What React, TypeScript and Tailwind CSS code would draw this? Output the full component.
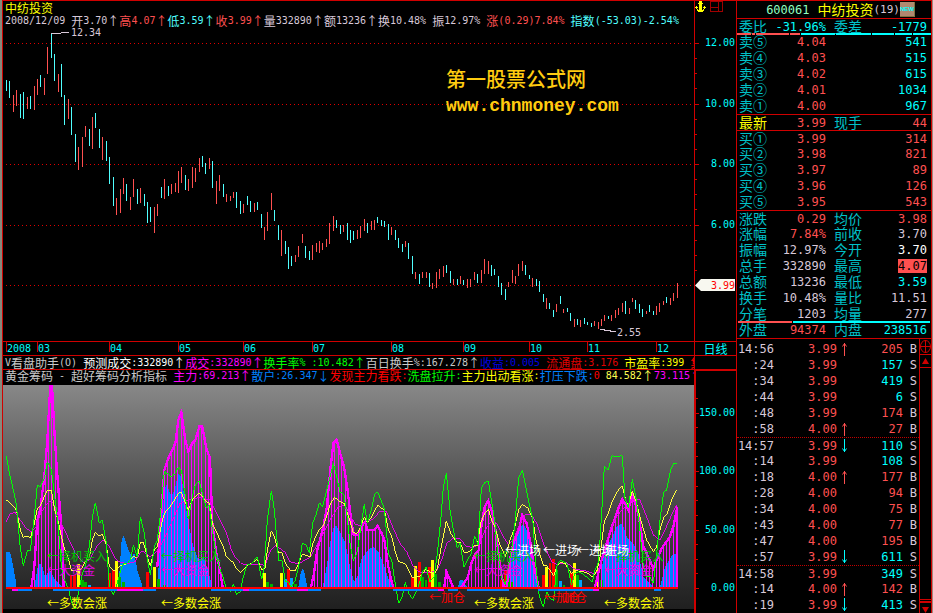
import React from "react";
import clsx from "clsx";

const MONO = "font-['DejaVu_Sans_Mono','Liberation_Mono',monospace]";
const CJK = "font-['Noto_Sans_CJK_SC',sans-serif]";

/* Half-width runs are set in a monospace face, everything else in the CJK face. */
function Mixed({ text, className }: { text: string; className?: string }) {
  const runs = text.split(/([\x20-\x7e]+)/).filter(Boolean);
  return (
    <span className={clsx("flex shrink-0 items-center whitespace-pre leading-none", className)}>
      {runs.map((run, i) => (
        <span key={i} className={/^[\x20-\x7e]/.test(run) ? clsx(MONO, "text-[10px]") : clsx(CJK, "text-[12px]")}>
          {run}
        </span>
      ))}
    </span>
  );
}

type Piece = [string, string];

const status: Piece[] = [
  ["2008/12/09 开3.70↑", "text-[#d8c8d8]"],
  ["高4.07↑", "text-[#ff5050]"],
  ["低3.59↑", "text-[#50ffff]"],
  ["收3.99↑", "text-[#ff5050]"],
  ["量332890↑额13236↑换10.48% 振12.97% ", "text-[#d8c8d8]"],
  ["涨(0.29)7.84% ", "text-[#ff5050]"],
  ["指数(-53.03)-2.54%", "text-[#50ffff]"],
];

const helperLine: Piece[] = [
  ["V看盘助手(O) ", "text-[#c8c8c8]"],
  ["预测成交:332890↑", "text-white"],
  ["成交:332890↑", "text-[#ff00ff]"],
  ["换手率% :10.482↑", "text-[#00ff00]"],
  ["百日换手%:167.278↑", "text-[#c8c8c8]"],
  ["收益:0.005 ", "text-[#0000e0]"],
  ["流通盘:3.176 ", "text-[#e00000]"],
  ["市盈率:399 ", "text-[#ffff00]"],
  ["集", "text-[#ff0000]"],
];

const chipLine: Piece[] = [
  ["黄金筹码 - 超好筹码分析指标 ", "text-[#c8c8c8]"],
  ["主力:69.213↑", "text-[#ff00ff]"],
  ["散户:26.347↓", "text-[#0080ff]"],
  ["发现主力看跌:", "text-[#ff0000]"],
  ["洗盘拉升:", "text-[#00ff00]"],
  ["主力出动看涨:", "text-[#ffff00]"],
  ["打压下跌:", "text-[#0080ff]"],
  ["0 ", "text-[#ff0000]"],
  ["84.582↑", "text-[#ffff50]"],
  ["73.115↑", "text-[#ff00ff]"],
];

function Line({ pieces }: { pieces: Piece[] }) {
  return (
    <div className="flex min-w-0 flex-1 items-center overflow-x-clip pl-0.5">
      {pieces.map(([text, tone]) => (
        <Mixed key={text} text={text} className={tone} />
      ))}
    </div>
  );
}

/* x, high, low of every daily bar: "u" is a rising day, "d" a falling one. */
const bars =
  "6,80,91,d 9,81,98,d 13,95,112,u 16,90,106,u 20,94,118,d 23,92,119,d 27,97,109,u 30,96,109,d 34,86,110,u 37,79,95,u 40,75,87,d 44,78,95,u 47,47,74,u 51,33,58,d 54,54,81,d 58,74,92,u 61,64,97,d 64,95,125,d 68,99,119,u 71,107,135,d 75,134,162,d 78,147,170,u 82,137,167,u 85,126,137,u 89,129,146,d 92,117,149,u 95,113,128,d 99,129,148,d 102,137,160,u 106,141,161,d 109,157,184,d 113,177,206,d 116,198,215,u 120,189,213,u 123,178,194,u 126,184,201,d 130,197,210,u 133,179,197,u 137,189,204,d 140,188,203,u 144,194,206,d 147,202,223,d 150,207,222,d 154,207,233,u 157,204,216,u 161,187,198,d 164,179,199,u 168,186,196,d 171,184,194,u 175,183,192,u 178,171,193,u 181,167,183,u 185,175,190,d 188,179,191,u 192,167,188,u 195,168,182,u 199,158,172,u 202,156,167,d 205,163,174,d 209,158,169,u 212,161,188,d 216,181,204,u 219,175,191,u 223,184,197,d 226,194,202,u 230,196,201,u 233,192,198,u 236,192,208,d 240,201,214,d 243,204,213,u 247,196,205,d 250,201,212,d 254,203,212,u 257,202,210,d 261,214,228,d 264,227,240,u 267,212,231,u 271,193,210,u 274,210,221,d 278,225,240,d 281,230,256,u 285,241,254,d 288,247,269,d 291,256,266,d 295,255,262,u 298,246,257,u 302,234,243,u 305,246,258,d 309,251,260,d 312,245,260,u 316,243,252,u 319,241,253,u 322,243,250,u 326,239,247,u 329,223,244,u 333,216,231,u 336,220,228,d 340,225,234,d 343,225,232,u 347,223,240,d 350,230,243,d 353,231,240,d 357,230,239,u 360,226,238,u 364,219,231,u 367,223,233,d 371,221,230,u 374,220,230,u 377,217,223,d 381,220,226,d 384,221,227,d 388,224,240,d 391,227,235,u 395,230,240,d 398,238,248,d 402,244,252,d 405,241,247,u 408,243,259,d 412,256,274,d 415,272,279,u 419,274,284,d 422,272,278,u 426,272,278,u 429,273,287,d 432,283,289,u 436,272,288,u 439,269,279,u 443,266,277,u 446,265,273,d 450,271,283,d 453,279,285,u 457,279,285,d 460,276,284,u 463,280,285,d 467,279,288,u 470,279,287,u 474,272,280,u 477,274,283,d 481,270,283,u 484,259,274,u 488,261,274,u 491,265,276,d 494,269,275,d 498,276,287,d 501,283,295,d 505,289,300,d 508,282,287,u 512,270,283,u 515,276,284,u 518,264,276,u 522,261,271,u 525,265,275,d 529,275,279,d 532,278,287,u 536,279,286,d 539,281,292,d 543,294,302,d 546,298,309,u 549,303,309,d 553,310,317,d 556,304,312,u 560,296,304,d 563,309,313,u 567,308,312,d 570,313,321,d 574,319,327,u 577,319,325,d 580,320,327,u 584,318,324,d 587,322,325,d 591,323,327,d 594,321,326,u 598,322,329,u 601,319,326,u 604,315,321,u 608,316,319,d 611,315,321,u 615,310,318,u 618,308,315,u 622,303,312,u 625,301,314,d 629,308,314,u 632,298,302,u 635,300,309,d 639,304,313,d 642,309,317,d 646,311,314,u 649,305,312,d 653,311,315,d 656,306,315,u 659,303,312,u 663,301,305,u 666,297,303,d 670,298,305,u 673,293,301,u 677,283,298,u"
    .split(" ")
    .map((b) => b.split(","));

function barPath(kind: string) {
  return bars
    .filter((b) => b[3] === kind)
    .map(([x, hi, lo]) => `M${x} ${hi}V${lo}`)
    .join("");
}

function PriceChart() {
  return (
    <svg
      className="block h-0 min-h-0 w-full flex-1"
      viewBox="3 28 691 313"
      preserveAspectRatio="none"
      shapeRendering="crispEdges"
      role="img"
      aria-label="日线 K 线图"
    >
      {[43, 104, 164, 225, 285].map((y) => (
        <path key={y} d={`M6 ${y + 0.5}H692`} stroke="#e00000" strokeDasharray="1 3" />
      ))}
      <g transform="translate(.5 0)" fill="none">
        <path d={barPath("u")} stroke="#ff5050" />
        <path d={barPath("d")} stroke="#50ffff" />
      </g>
      <path d="M51 33.5H61M61 32.5H69M600 329.5H605M604 330.5H611M610 331.5H616" stroke="#d8c8d8" />
      <g fill="#d8c8d8" className={clsx(MONO, "text-[10px]")}>
        <text x="71" y="36">12.34</text>
        <text x="617" y="336">2.55</text>
      </g>
      <g fill="#ffcc10">
        <text x="446" y="87" className="font-['Noto_Sans_CJK_SC',sans-serif] text-[20px] font-medium">第一股票公式网</text>
        <text x="446" y="111" className="font-['Liberation_Mono',monospace] text-[18px] font-bold">www.chnmoney.com</text>
      </g>
    </svg>
  );
}

function PriceAxis() {
  const minor = [58, 73, 88, 119, 134, 149, 179, 194, 209, 240, 255, 270];
  const major: [number, string][] = [[43, "12.00"], [104, "10.00"], [164, "8.00"], [225, "6.00"]];
  return (
    <svg className="block h-0 min-h-0 w-full flex-1" viewBox="695 28 41 313" preserveAspectRatio="none">
      {minor.map((y) => (
        <path key={y} d={`M695 ${y + 0.5}h2`} stroke="#d00000" />
      ))}
      {major.map(([y, label]) => (
        <g key={label}>
          <path d={`M695 ${y + 0.5}h4`} stroke="#d00000" />
          <text x="735" y={y + 3} textAnchor="end" fill="#00ffff" className={clsx(MONO, "text-[10px]")}>{label}</text>
        </g>
      ))}
      <path d="M695 285.5l6-6.500h34v12h-34z" fill="#f8f8f0" />
      <text x="735" y="289" textAnchor="end" fill="#ff0000" className={clsx(MONO, "text-[10px]")}>3.99</text>
    </svg>
  );
}

const months: [string, number][] = [
  ["2008", 31], ["03", 72], ["04", 69], ["05", 65], ["06", 69], ["07", 79],
  ["08", 72], ["09", 66], ["10", 58], ["11", 69], ["12", 38],
];

/* The lower pane is charted in three stretches, on a grid of thirds. */
const BASE = 622;

interface Stretch {
  offset: number;
  green: string;
  yellow: string;
  thin: string;
  thick: string[];
  blue: string[];
  columns: string;
  strip: string;
}

const stretches: Stretch[] = [
  {
    offset: 0,
    green: "19,228 28,278 40,330 49,375 61,505 70,557 82,512 91,512 103,410 112,315 121,320 133,295 142,245 154,270 163,340 175,440 184,560 193,600 205,625 214,665 226,688 235,640 247,580 256,560 268,500 277,410 286,368 298,430 307,420 319,490 328,615 340,645 349,620 361,575 370,552 382,550 391,540 400,495 412,530 421,410 433,460 442,540 451,585 463,500 472,480 484,380 493,275 514,290 526,280 535,262 544,270 556,350 565,418 577,350 586,315 598,303 607,340 619,385 628,375 637,450 649,530 658,560 670,595 679,628 691,632 700,612 709,643",
    yellow: "19,360 40,378 49,390 61,450 70,472 82,468 91,474 103,430 112,385 121,378 133,350 142,331 154,331 163,385 175,425 184,470 193,505 205,535 214,570 226,572 235,577 247,562 256,545 268,535 277,480 286,458 298,468 307,463 319,495 328,560 340,572 349,570 361,558 382,550 400,530 412,532 421,487 430,487 442,530 451,557 463,510 472,500 484,435 493,400 514,375 535,340 544,337 556,368 565,390 577,360 598,338 619,365 628,370 637,430 649,455 658,475 670,500 679,530 691,542",
    thin: "19,425 30,402 45,397 61,420 80,447 95,455 110,440 121,400 142,370 154,362 163,375 184,430 205,475 226,520 250,548 268,540 290,500 310,480 325,495 345,535 361,548 385,550 405,545 425,512 450,530 475,510 500,460 540,370 560,362 600,352 630,360 650,400 680,460 691,500",
    thick: [
      "94,622 103,560 112,420 121,385 133,290 142,180 151,15 156,15 163,150 170,260 184,440 193,622",
      "472,560 484,400 493,270 505,235 526,190 535,120 544,97 556,180 565,215 577,190 586,180 598,140 607,140 619,205 630,235 637,430 649,520 660,570 668,622",
    ],
    blue: [
      "19,622 19,515 30,515 38,550 47,600 49,622",
      "103,622 115,550 125,552 135,590 150,570 165,600 190,622",
      "355,622 365,480 370,468 376,480 385,510 395,530 403,520 412,570 425,610 428,622",
      "472,622 482,460 493,330 500,315 515,350 526,320 535,280 544,290 556,370 565,430 580,500 595,540 610,530 625,575 637,622",
    ],
    columns: "213,585,r 223,585,r 235,552,y 247,600,g 256,607,g 268,615,c 328,580,r 340,570,r 349,542,y 358,590,g 370,605,g 442,577,r 463,562,y 475,597,g 493,615,g",
    strip: "36,55,m 55,97,b 160,350,b 350,430,m 430,467,b 633,692,b",
  },
  {
    offset: 690,
    green: "0,635 10,612 19,643 30,635 40,590 52,552 61,555 82,530 95,598 103,560 112,420 124,332 133,390 146,542 156,542 166,605 175,605 184,622 196,600 206,560 217,490 228,495 238,518 248,430 258,405 268,368 278,380 290,330 302,285 310,250 320,290 330,335 342,345 350,400 360,490 370,542 382,515 394,430 403,373 412,430 424,390 433,345 443,335 455,365 463,385 475,520 485,540 497,620 506,670 517,650 526,607 536,640 547,657 558,635 568,610 578,575 588,562 600,605 612,590 622,520 634,400 640,320 649,280 660,390 670,450 682,505 690,490",
    yellow: "0,542 10,547 20,568 32,577 50,558 61,552 82,538 95,570 105,565 112,510 124,452 133,470 145,517 155,517 166,550 182,572 196,572 206,550 217,522 240,530 248,490 268,448 280,438 290,410 300,375 313,352 330,365 342,370 356,410 370,458 382,460 392,440 403,410 412,428 424,412 443,376 463,390 475,450 485,470 497,520 506,545 526,552 547,592 568,590 588,568 600,575 612,585 622,565 634,500 649,422 662,460 680,487 690,487",
    thin: "0,500 15,530 32,550 50,555 90,552 105,558 120,515 137,495 165,517 180,545 205,552 225,540 240,532 270,480 300,420 325,380 345,375 357,400 375,432 390,437 410,425 430,418 450,393 470,395 490,445 510,490 530,515 550,560 570,577 600,578 620,572 635,540 650,490 670,475 690,477",
    thick: [
      "243,622 252,580 262,510 280,440 290,385 302,260 310,190 320,180 332,225 342,260 352,325 360,390 370,463 385,465 400,430 405,425 412,450 433,450 443,437 455,460 463,480 475,560 485,605 490,622",
      "643,622 649,575 658,595 670,622",
    ],
    blue: [
      "205,622 213,575 217,568 222,572 232,622",
      "278,622 290,560 300,490 310,445 318,437 330,455 345,485 360,560 372,605 382,590 395,535 410,515 428,500 445,515 460,550 475,595 490,622",
      "683,622 690,600 700,605 712,622",
    ],
    columns: "103,580,y 112,605,g 124,612,g 155,580,y 166,597,c 175,567,r 184,595,c 196,612,g 547,592,r 556,558,y 568,545,r 578,590,g 588,600,g 598,562,r 607,540,y 617,583,g 628,605,g",
    strip: "0,40,b 40,58,m 58,200,b 200,235,m 235,272,b 490,625,b 625,643,m 655,685,b",
  },
  {
    offset: 1380,
    green: "0,490 12,560 22,540 34,520 44,467 54,495 64,325 74,307 85,304 95,365 105,430 112,510 124,590 136,615 145,560 156,500 166,420 176,292 187,270 197,320 207,370 218,415 228,560 238,650 250,682 260,635 270,655 281,662 290,560 301,540 315,548 322,552 334,615 345,580 356,575 370,582 387,598 397,605 405,570 414,550 420,480 428,350 433,260 445,270 456,227 466,230 487,227 495,355 505,385 517,298 528,355 538,430 550,560 560,590 570,590 580,610 590,520 600,420 611,337 620,330 632,270 642,250 652,250",
    yellow: "0,487 12,517 24,517 34,510 44,495 52,497 62,430 74,400 85,388 95,420 105,440 118,490 136,530 150,480 162,450 176,390 187,373 204,385 218,415 228,480 238,520 250,555 260,558 270,570 281,588 290,560 301,547 315,550 334,580 345,572 370,575 387,582 397,590 410,575 420,530 433,425 445,400 456,365 475,330 487,317 497,360 505,375 517,333 530,370 545,430 560,480 580,515 590,500 600,450 611,412 622,400 635,360 650,330",
    thin: "0,477 20,500 40,502 60,490 75,450 95,422 110,430 130,470 145,493 160,480 180,430 195,405 215,405 230,430 250,490 275,545 290,553 320,548 345,568 375,572 400,580 415,575 430,520 450,450 470,410 490,385 515,360 540,360 560,410 580,465 600,480 615,450 635,405 650,375",
    thick: [
      "4,622 12,610 24,590 34,550 44,525 56,510 64,440 74,380 85,362 97,400 105,440 113,500 124,585 134,622",
      "140,622 150,540 160,490 176,450 187,405 200,430 210,480 222,560 236,622",
      "405,622 415,580 425,540 440,490 456,440 475,385 487,357 505,390 517,345 535,400 550,500 560,520 580,565 590,540 605,505 630,470 640,440 652,380 652,622",
    ],
    blue: [
      "0,600 10,602 20,622 0,622",
      "145,622 150,540 160,500 176,450 190,430 205,460 220,540 236,622",
      "420,622 430,530 445,495 470,440 487,430 500,470 520,490 535,520 550,590 560,600 580,622",
      "600,622 615,560 640,520 652,525 652,622",
    ],
    columns: "124,600,r 136,570,r 145,595,g 156,607,g 250,585,r 260,562,y 270,548,r 281,537,r 290,570,g 301,603,c 312,615,g 334,578,r 343,550,y 352,585,g 362,600,c 414,570,y 424,600,g",
    strip: "22,148,b 235,400,b 400,418,m 582,602,b",
  },
];

const inks: Record<string, string> = {
  r: "#ff0000", y: "#ffff00", g: "#00b000", c: "#00a0ff", m: "#ff00ff", b: "#0080ff",
};

/* Vertical stems from a curve down to the base line, one for every trading day. */
function stems(points: string) {
  const pts = points.split(" ").map((p) => p.split(",").map(Number));
  const last = pts[pts.length - 1][0];
  let d = "";
  for (let x = pts[0][0] + 9; x < last; x += 10.2) {
    const i = pts.findIndex((p) => p[0] > x);
    if (i < 1) continue;
    const [x0, y0] = pts[i - 1];
    const [x1, y1] = pts[i];
    const y = y0 + ((y1 - y0) * (x - x0)) / (x1 - x0);
    d += `M${Math.round(x / 3) * 3 + 1.5} ${Math.round(y)}V${BASE}`;
  }
  return d;
}

const notes: [number, number, string, string][] = [
  [47, 561, "←择机买入", "#00c800"],
  [161, 561, "←择机买入", "#00c800"],
  [474, 561, "←择机买入", "#00c800"],
  [604, 561, "←择机买入", "#00c800"],
  [47, 575, "←大资金", "#e800e8"],
  [161, 575, "←大资金", "#e800e8"],
  [474, 575, "←大资金", "#e800e8"],
  [604, 575, "←大资金", "#e800e8"],
  [505, 555, "←进场", "#ffffff"],
  [543, 555, "←进场", "#ffffff"],
  [577, 555, "←进场", "#ffffff"],
  [593, 555, "←进场", "#ffffff"],
  [429, 602, "←加仓", "#ff0000"],
  [544, 602, "←加仓", "#ff0000"],
  [551, 602, "←加仓", "#ff0000"],
  [47, 608, "←多数会涨", "#ffff00"],
  [161, 608, "←多数会涨", "#ffff00"],
  [474, 608, "←多数会涨", "#ffff00"],
  [604, 608, "←多数会涨", "#ffff00"],
];

function ChipChart() {
  return (
    <svg
      className="block h-full min-w-0 flex-1 bg-linear-to-b from-[#888888] via-[#4c4c4c] to-[#202020]"
      viewBox="3 385 691 224"
      preserveAspectRatio="none"
      shapeRendering="crispEdges"
      role="img"
      aria-label="黄金筹码指标图"
    >
      {stretches.map((s) => (
        <g key={s.offset} transform={`translate(0 380) scale(.33333) translate(${s.offset} 0)`} fill="none">
          {s.blue.map((p) => <polygon key={p} points={p} fill="#0080ff" />)}
          {s.columns.split(" ").map((c) => {
            const [x, y, ink] = c.split(",");
            return <rect key={c} x={Number(x) - 4} y={y} width={8} height={BASE - Number(y)} fill={inks[ink]} />;
          })}
          {s.thick.map((p) => (
            <g key={p} stroke="#ff00ff">
              <path d={stems(p)} strokeWidth={3} />
              <polyline points={p} strokeWidth={7} />
            </g>
          ))}
          <g strokeWidth={3}>
            <polyline points={s.thin} stroke="#e800e8" />
            <polyline points={s.yellow} stroke="#ffff40" />
            <polyline points={s.green} stroke="#00ff00" />
          </g>
          {s.strip.split(" ").map((c) => {
            const [a, b, ink] = c.split(",");
            return <path key={c} d={`M${a} 631H${b}`} stroke={inks[ink]} strokeWidth={7} />;
          })}
        </g>
      ))}
      <path d="M6 588H678" stroke="#ff0000" strokeWidth={2} />
      <g className={clsx(CJK, "text-[12px]")}>
        {notes.map(([x, y, label, fill]) => (
          <text key={`${x}-${y}`} x={x} y={y} fill={fill}>{label}</text>
        ))}
      </g>
    </svg>
  );
}

function ChipAxis() {
  const major: [number, string][] = [[413, "150.00"], [471, "100.00"], [530, "50.00"], [588, "0.00"]];
  const minor = [398, 427, 442, 456, 486, 500, 515, 544, 559, 573];
  return (
    <svg className="block h-full w-full" viewBox="696 385 40 224" preserveAspectRatio="none">
      {minor.map((y) => (
        <path key={y} d={`M696 ${y + 0.5}h2`} stroke="#d00000" />
      ))}
      {major.map(([y, label]) => (
        <g key={label}>
          <path d={`M696 ${y + 0.5}h3`} stroke="#d00000" />
          <text x="735" y={y + 3} textAnchor="end" fill="#00ffff" className={clsx(MONO, "text-[10px]")}>{label}</text>
        </g>
      ))}
    </svg>
  );
}

const red = "text-[#ff5050]";
const cyan = "text-[#00ffff]";
const grey = "text-[#d8c8d8]";

interface Quote {
  a: string;
  av: string;
  at: string;
  b?: string;
  bv: string;
  bt: string;
  rule?: boolean;
  label?: string;
  mark?: boolean;
}

const ratio: Quote[] = [{ a: "委比", av: "-31.96%", at: cyan, b: "委差", bv: "-1779", bt: cyan, rule: true }];

const book: Quote[] = [
  { a: "卖⑤", av: "4.04", at: red, bv: "541", bt: cyan },
  { a: "卖④", av: "4.03", at: red, bv: "515", bt: cyan },
  { a: "卖③", av: "4.02", at: red, bv: "615", bt: cyan },
  { a: "卖②", av: "4.01", at: red, bv: "1034", bt: cyan },
  { a: "卖①", av: "4.00", at: red, bv: "967", bt: cyan },
  { a: "最新", av: "3.99", at: red, b: "现手", bv: "44", bt: red, rule: true, label: "text-[#ffff00]" },
  { a: "买①", av: "3.99", at: red, bv: "314", bt: red, rule: true },
  { a: "买②", av: "3.98", at: red, bv: "821", bt: red },
  { a: "买③", av: "3.97", at: red, bv: "89", bt: red },
  { a: "买④", av: "3.96", at: red, bv: "126", bt: red },
  { a: "买⑤", av: "3.95", at: red, bv: "543", bt: red },
  { a: "涨跌", av: "0.29", at: red, b: "均价", bv: "3.98", bt: red, rule: true },
  { a: "涨幅", av: "7.84%", at: red, b: "前收", bv: "3.70", bt: grey },
  { a: "振幅", av: "12.97%", at: grey, b: "今开", bv: "3.70", bt: "text-white" },
  { a: "总手", av: "332890", at: grey, b: "最高", bv: "4.07", bt: "text-black", mark: true },
  { a: "总额", av: "13236", at: grey, b: "最低", bv: "3.59", bt: cyan },
  { a: "换手", av: "10.48%", at: grey, b: "量比", bv: "11.51", bt: grey },
  { a: "分笔", av: "1203", at: grey, b: "均量", bv: "277", bt: grey },
];

const volume: Quote[] = [{ a: "外盘", av: "94374", at: red, b: "内盘", bv: "238516", bt: cyan }];

function QuoteTable({ rows }: { rows: Quote[] }) {
  return (
    <table className="block">
      <tbody className="block">
        {rows.map((q) => (
          <tr
            key={q.a}
            className={clsx(
              "grid h-4 grid-cols-[28px_59px_36px_1fr] items-center pr-1 pl-0.5 text-right text-[12px] leading-none",
              q.rule && "border-t border-[#d00000]",
              MONO,
            )}
          >
            <th scope="row" className={clsx(CJK, "pb-0.5 text-left text-[14px] font-normal whitespace-nowrap", q.label ?? "text-[#00c0c8]")}>{q.a}</th>
            <td className={q.at}>{q.av}</td>
            <td className={clsx(CJK, "pb-0.5 pl-2 text-left text-[14px] whitespace-nowrap text-[#00c0c8]")}>{q.b}</td>
            <td className={q.bt}>
              <span className={clsx(q.mark && "bg-[#ff5050]")}>{q.bv}</span>
            </td>
          </tr>
        ))}
      </tbody>
    </table>
  );
}

const ticks: [string, string, string, number, string][] = [
  ["14:56", "3.99", "↑", 205, "B"],
  [":24", "3.99", "", 157, "S"],
  [":34", "3.99", "", 419, "S"],
  [":44", "3.99", "", 6, "S"],
  [":48", "3.99", "", 174, "B"],
  [":58", "4.00", "↑", 27, "B"],
  ["14:57", "3.99", "↓", 110, "S"],
  [":14", "3.99", "", 108, "S"],
  [":18", "4.00", "↑", 177, "B"],
  [":28", "4.00", "", 94, "B"],
  [":34", "4.00", "", 75, "B"],
  [":43", "4.00", "", 77, "B"],
  [":47", "4.00", "", 195, "B"],
  [":57", "3.99", "↓", 611, "S"],
  ["14:58", "3.99", "", 349, "S"],
  [":14", "4.00", "↑", 142, "B"],
  [":19", "3.99", "↓", 413, "S"],
];

function TickTable() {
  return (
    <table className={clsx("block min-w-0 flex-1 pt-0.5 text-[12px] leading-none", MONO)}>
      <tbody className="block">
        {ticks.map(([time, price, dir, vol, side], i) => (
          <tr
            key={i}
            className={clsx(
              "grid h-4 grid-cols-[37px_63px_12px_1fr_16px] items-center text-right",
              i > 0 && time.length > 3 && "border-t border-dotted border-[#c00000]",
            )}
          >
            <td className={grey}>{time}</td>
            <td className={red}>{price}</td>
            <td className={dir === "↑" ? red : cyan}>
              {dir && (
                <svg className="ml-1 block h-3.5 w-[7px]" viewBox="0 0 7 14" fill="none" stroke="currentColor">
                  <path d={dir === "↑" ? "M3.500 1V14M1.500 4.500l2-3 2 3" : "M3.500 0V13M1.500 9.500l2 3 2-3"} />
                </svg>
              )}
            </td>
            <td className={side === "B" ? red : cyan}>{vol}</td>
            <td className={clsx("pr-0.5", grey)}>{side}</td>
          </tr>
        ))}
      </tbody>
    </table>
  );
}

export default function App() {
  return (
    <main className="flex h-screen overflow-hidden border-r border-l-2 border-r-[#a08880] border-l-[#88887c] bg-black">
      <section className="flex min-w-0 flex-1 flex-col border-t border-l border-[#d00000]">
        <div className="flex min-h-0 flex-[340]">
          <div className="flex min-w-0 flex-1 flex-col">
            <h1 className={clsx(CJK, "h-[13px] pl-0.5 text-[12px] leading-[13px] text-[#ffff00]")}>中纺投资</h1>
            <div className="flex h-3.5 shrink-0">
              <Line pieces={status} />
            </div>
            <PriceChart />
          </div>
          <div className="flex w-[42px] shrink-0 flex-col border-l border-[#d00000]">
            <div className="flex h-[27px] shrink-0 items-start gap-1">
              <button type="button" aria-label="锁定" className="block">
                <svg className="h-3 w-[11px]" viewBox="0 0 11 12" fill="#ffff00" shapeRendering="crispEdges">
                  <path d="M4 0h3v2h-3zM3 2h5v1h-5zM4 3h3v8h-3zM0 6h3v1h-3zM1 5h1v3h-1zM2 8h1v2h-1zM3 9h1v2h-1zM8 6h3v1h-3zM9 5h1v3h-1zM8 8h1v2h-1zM7 9h1v2h-1z" />
                </svg>
              </button>
              <button type="button" aria-label="窗口" className="block">
                <svg className="h-3 w-[13px]" viewBox="0 0 13 12" fill="none" stroke="#a00000" shapeRendering="crispEdges">
                  <path d="M.5.5h12v10H.5zM1 6.500h7.500M8.500 1v10" />
                </svg>
              </button>
            </div>
            <PriceAxis />
          </div>
        </div>

        <div className="flex h-3.5 shrink-0 border-t border-[#d00000]">
          <div className="flex min-w-0 flex-1 pl-[3px]">
            {months.map(([label, span]) => (
              <div key={label} className="min-w-0 basis-0" style={{ flexGrow: span }}>
                <span className={clsx(MONO, "block h-2.5 border-l border-[#d00000] text-[10px] leading-[13px] text-[#00ffff]")}>{label}</span>
              </div>
            ))}
          </div>
          <button type="button" className={clsx(CJK, "w-[42px] shrink-0 border-l border-[#d00000] text-center text-[12px] leading-[12px] text-[#00ffff]")}>
            日线
          </button>
        </div>

        <div className="flex h-3.5 shrink-0 border-t border-[#d00000]">
          <Line pieces={helperLine} />
          <div className="w-[42px] shrink-0 border-l border-[#d00000]" />
        </div>

        <div className="flex h-4 shrink-0 border-t border-[#d00000]">
          <div className="flex h-3 min-w-0 flex-1">
            <Line pieces={chipLine} />
          </div>
          <div className="w-[42px] shrink-0 border-t border-l-2 border-[#d00000]" />
        </div>

        <div className="flex min-h-0 flex-[224]">
          <ChipChart />
          <div className="w-[42px] shrink-0 border-l-2 border-[#d00000]">
            <ChipAxis />
          </div>
        </div>
        <div className="flex h-1 shrink-0 justify-end">
          <div className="w-[42px] border-l-2 border-[#d00000]" />
        </div>
      </section>

      <aside className="flex w-[196px] shrink-0 flex-col border-x border-t border-[#d00000]">
        <header className="flex h-[17px] shrink-0 items-center justify-end pr-4 leading-none">
          <span className={clsx(MONO, "mr-2 text-[12px] text-[#90ffc0]")}>600061</span>
          <span className={clsx(CJK, "pb-0.5 text-[14px] text-[#ffff00]")}>中纺投资</span>
          <span className={clsx(MONO, "text-[11px]", grey)}>(19)</span>
          <span className="h-[15px] w-[15px] border-r border-b border-[#807040] bg-[#b08870] text-center font-['Liberation_Sans',sans-serif] text-[6px] leading-[15px] font-bold text-[#00ffff]">
            NEW
          </span>
        </header>

        <QuoteTable rows={ratio} />
        <div className="relative -my-px flex h-0.5 shrink-0 gap-px">
          <div className="w-[7%] bg-[#ff5050]" />
          <div className="w-[2%] bg-[#ff5050]" />
          <div className="w-[17%] bg-[#ff5050]" />
          <div className="w-[5%] bg-[#ff5050]" />
          <div className="flex-[34] bg-[#00ffff]" />
          <div className="flex-[36] bg-[#00ffff]" />
          <div className="flex-[22] bg-[#00ffff]" />
          <div className="flex-[18] bg-[#00ffff]" />
          <div className="flex-[18] bg-[#00ffff]" />
        </div>
        <QuoteTable rows={book} />
        <div className="relative -my-px flex h-0.5 shrink-0 gap-px px-px">
          <div className="w-[28%] bg-[#ff5050]" />
          <div className="flex-1 bg-[#00ffff]" />
        </div>
        <QuoteTable rows={volume} />

        <div className="flex min-h-0 flex-1 border-t border-[#d00000]">
          <TickTable />
          <div className="flex w-3 shrink-0 flex-col border-l border-[#d00000]">
            <button type="button" aria-label="定位" className="block">
              <svg className="block h-[15px] w-[11px]" viewBox="0 0 11 15" fill="none" stroke="#d00000">
                <ellipse cx="5.5" cy="7.5" rx="5" ry="6" />
                <path d="M5.500 1v13M0 7.500h11" />
              </svg>
            </button>
            <button type="button" aria-label="上翻" className="block border-y border-[#d00000]">
              <svg className="block h-3 w-[11px]" viewBox="0 0 11 12" fill="#d00000">
                <path d="M5.500 3L9 9H2z" />
              </svg>
            </button>
            <div className="flex-1" />
            <div className="h-0.5 border-t border-[#d00000]" />
            <button type="button" aria-label="下翻" className="block border-t-2 border-[#d00000]">
              <svg className="block h-2.5 w-[11px]" viewBox="0 0 11 10" fill="#d00000">
                <path d="M2 4H9L5.500 10z" />
              </svg>
            </button>
          </div>
        </div>
      </aside>
    </main>
  );
}
